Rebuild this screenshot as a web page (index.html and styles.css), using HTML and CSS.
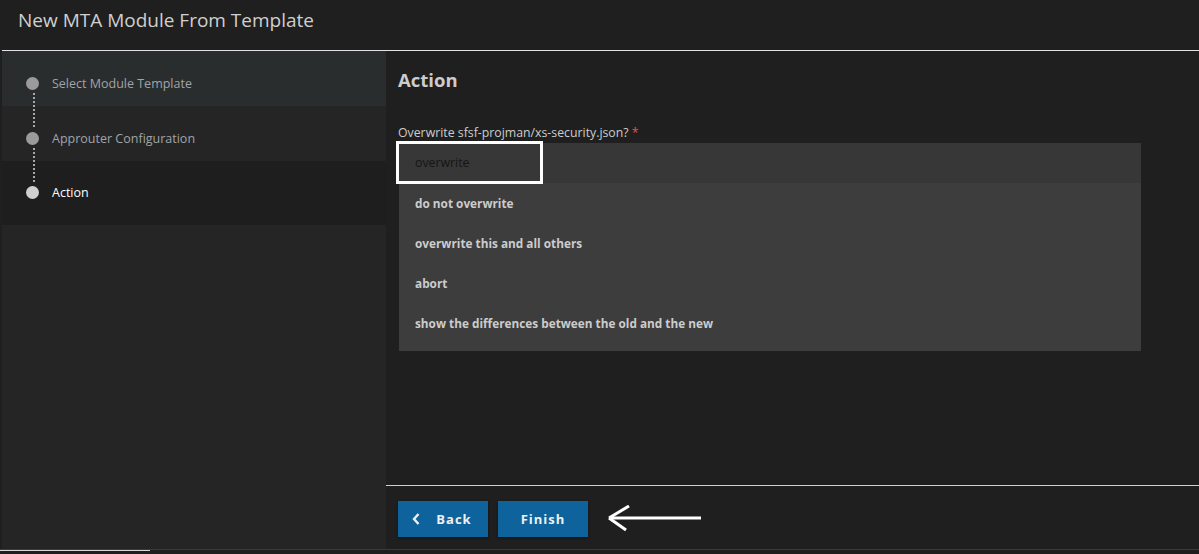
FILE: index.html
```html
<!DOCTYPE html>
<html>
<head>
<meta charset="utf-8">
<link rel="stylesheet" href="styles.css">
</head>
<body>
<header class="header">
  <h1 class="title">New MTA Module From Template</h1>
</header>
<div class="main">
  <nav class="steps">
    <div class="step step-done">
      <span class="dot"></span><span class="step-label">Select Module Template</span>
    </div>
    <div class="step step-second">
      <span class="dot"></span><span class="step-label">Approuter Configuration</span>
    </div>
    <div class="step step-active">
      <span class="dot"></span><span class="step-label">Action</span>
    </div>
  </nav>
  <section class="content">
    <div class="form">
      <h2 class="heading">Action</h2>
      <label class="question">Overwrite sfsf-projman/xs-security.json? <span class="req">*</span></label>
      <ul class="choices">
        <li class="choice choice-first"><span class="focus">overwrite</span></li>
        <li class="choice">do not overwrite</li>
        <li class="choice">overwrite this and all others</li>
        <li class="choice">abort</li>
        <li class="choice">show the differences between the old and the new</li>
      </ul>
    </div>
    <footer class="footer">
      <button class="btn"><svg class="chev" width="8" height="12" viewBox="0 0 8 12"><path d="M6.5 1 L2 6 L6.5 11" fill="none" stroke="#f0f0f0" stroke-width="2.4"/></svg>Back</button>
      <button class="btn">Finish</button>
      <svg class="arrow" width="96" height="28" viewBox="0 0 96 28">
        <line x1="3" y1="13" x2="94" y2="13" stroke="#fff" stroke-width="3"/>
        <line x1="2" y1="13" x2="22" y2="1" stroke="#fff" stroke-width="3"/>
        <line x1="2" y1="13" x2="19" y2="25" stroke="#fff" stroke-width="3"/>
      </svg>
    </footer>
  </section>
</div>
<div class="status"><span class="status-bar"></span></div>
</body>
</html>
```

FILE: styles.css
```css
* { box-sizing: border-box; }
html, body {
  margin: 0;
  padding: 0;
  background: #1f1f1f;
  height: 554px;
  overflow: hidden;
  font-family: "Open Sans", "Noto Sans", "Liberation Sans", sans-serif;
  color: #cccccc;
}
.header {
  height: 51px;
  margin-left: 2px;
  border-bottom: 1px solid #e2e2e2;
  padding-left: 16px;
}
.title {
  margin: 0;
  font-size: 19px;
  font-weight: 400;
  line-height: 40px;
  color: #cfcfcf;
}
.main {
  display: flex;
  height: 498px;
}
.steps {
  width: 384px;
  margin-left: 2px;
  background: #252526;
  display: flex;
  flex-direction: column;
}
.step {
  position: relative;
  display: flex;
  align-items: center;
  height: 55px;
  padding-left: 24px;
  padding-top: 9px;
  font-size: 12.5px;
  color: #a0a4a8;
}
.step-done { background: #2a2d2e; }
.step-second { background: #252526; }
.step-active { background: #1e1e1e; height: 64px; color: #ffffff; padding-top: 0; padding-bottom: 2px; }
.dot {
  width: 13px;
  height: 13px;
  border-radius: 50%;
  background: #9b9b9b;
  margin-right: 13px;
  flex: none;
}
.step-active .dot { background: #d0d0d0; }
.step-done::after,
.step-second::after {
  content: "";
  position: absolute;
  left: 31px;
  top: 42px;
  height: 34px;
  border-left: 2px dotted #a8a8a8;
  z-index: 1;
}
.content {
  flex: 1;
  display: flex;
  flex-direction: column;
}
.form {
  flex: 1;
  padding: 14px 58px 0 12px;
}
.heading {
  margin: 0;
  font-size: 18.5px;
  font-weight: 700;
  line-height: 30px;
  color: #cccccc;
}
.question {
  display: block;
  margin-top: 30px;
  font-size: 12.3px;
  line-height: 16px;
  color: #cccccc;
}
.req { color: #f14c4c; }
.choices {
  list-style: none;
  margin: 2px 0 0 1px;
  padding: 0 0 8px;
  background: #3d3d3d;
}
.choice {
  height: 40px;
  line-height: 40px;
  padding-left: 16px;
  font-size: 11.8px;
  font-weight: 700;
  color: #cccccc;
}
.choice-first {
  background: #373737;
  padding-left: 0;
  padding-top: 1px;
}
.focus {
  display: block;
  width: 141px;
  height: 37px;
  line-height: 37px;
  padding-left: 16px;
  outline: 3px solid #ffffff;
  font-size: 12.3px;
  font-weight: 400;
  color: #151515;
}
.footer {
  height: 64px;
  border-top: 1px solid #d0d0d0;
  display: flex;
  align-items: center;
  gap: 10px;
  padding-left: 12px;
  padding-top: 2px;
}
.btn {
  width: 90px;
  height: 36px;
  border: none;
  background: #0e639c;
  color: #f0f0f0;
  font-family: inherit;
  font-size: 13px;
  font-weight: 700;
  letter-spacing: 1px;
  box-shadow: 0 1px 2px rgba(0,0,0,0.5);
  display: flex;
  align-items: center;
  justify-content: center;
  padding-top: 1px;
}
.chev {
  margin-right: 16px;
  margin-left: -2px;
  display: block;
}
.arrow {
  margin-left: 9px;
  display: block;
}
.status {
  height: 5px;
  border-top: 1px solid #3a3a3a;
  background: #1e1e1e;
}
.status-bar {
  display: block;
  width: 150px;
  height: 1px;
  background: #d8d8d8;
}
```
